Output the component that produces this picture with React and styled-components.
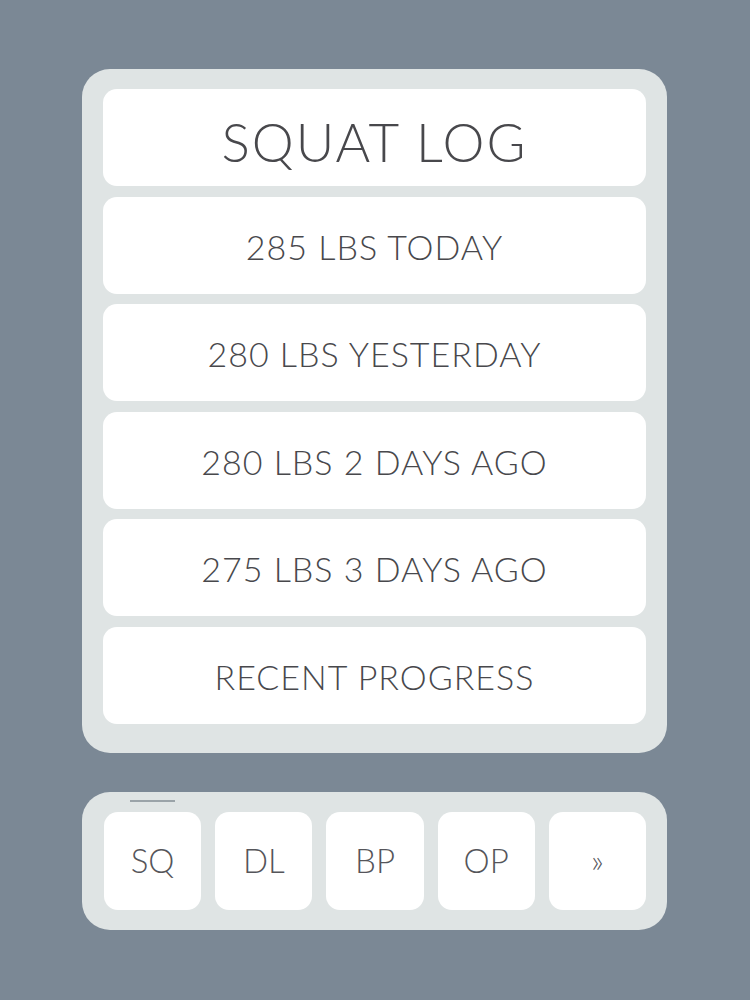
import React from "react";
import styled, { createGlobalStyle } from "styled-components";

const Global = createGlobalStyle`
  html, body { margin: 0; padding: 0; background: #7b8895; }
  body { font-family: "Lato", "Open Sans", sans-serif; }
`;

const Page = styled.div`
  width: 750px;
  height: 1000px;
  box-sizing: border-box;
  padding: 69px 83px 0 82px;
  display: flex;
  flex-direction: column;
  gap: 39px;
`;

const Panel = styled.div`
  background: #dfe4e4;
  border-radius: 28px;
  padding: 20px 21px 29px 21px;
  display: flex;
  flex-direction: column;
  gap: 10.5px;
`;

const Card = styled.div`
  background: #ffffff;
  border-radius: 14px;
  height: 97px;
  display: flex;
  align-items: center;
  justify-content: center;
  color: #48484c;
  font-weight: 300;
  font-size: ${(p) => (p.$title ? "53px" : "34px")};
  letter-spacing: ${(p) => (p.$title ? "2px" : "1px")};
  padding-top: ${(p) => (p.$title ? "8px" : "2px")};
  box-sizing: border-box;
`;

const Nav = styled.div`
  position: relative;
  background: #dfe4e4;
  border-radius: 28px;
  height: 138px;
  box-sizing: border-box;
  padding: 20px 21px 20px 22px;
  display: flex;
  gap: 14px;
`;

const Indicator = styled.div`
  position: absolute;
  left: 48px;
  top: 8px;
  width: 45px;
  height: 2px;
  background: #9aa3a8;
`;

const NavButton = styled.div`
  flex: 1;
  background: #ffffff;
  border-radius: 14px;
  display: flex;
  align-items: center;
  justify-content: center;
  color: #55555a;
  font-weight: 300;
  font-size: ${(p) => (p.$small ? "32px" : "33px")};
  padding-bottom: 2px;
`;

const rows = [
  "285 LBS TODAY",
  "280 LBS YESTERDAY",
  "280 LBS 2 DAYS AGO",
  "275 LBS 3 DAYS AGO",
  "RECENT PROGRESS",
];

export default function App() {
  return (
    <>
      <Global />
      <Page>
        <Panel>
          <Card $title>SQUAT LOG</Card>
          {rows.map((r) => (
            <Card key={r}>{r}</Card>
          ))}
        </Panel>
        <Nav>
          <Indicator />
          <NavButton>SQ</NavButton>
          <NavButton>DL</NavButton>
          <NavButton>BP</NavButton>
          <NavButton>OP</NavButton>
          <NavButton $small>»</NavButton>
        </Nav>
      </Page>
    </>
  );
}
